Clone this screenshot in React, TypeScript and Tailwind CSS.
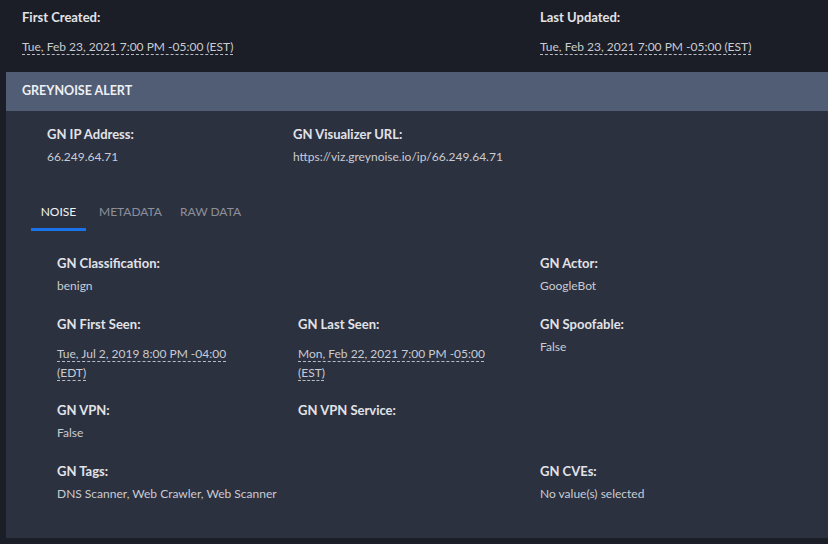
import React from 'react';

function Label({ children }: { children: React.ReactNode }) {
  return <div className="text-[13px] leading-[20px] font-bold text-[#e1e3e8]">{children}</div>;
}

function Value({ children }: { children?: React.ReactNode }) {
  return <div className="mt-[3px] text-[12px] leading-[20px] text-[#c9ccd3]">{children}</div>;
}

function DateValue({ children, narrow }: { children: React.ReactNode; narrow?: boolean }) {
  return (
    <div className={`mt-[10px] text-[12px] leading-[19px] text-[#c9ccd3] ${narrow ? 'max-w-[190px]' : ''}`}>
      <span className="underline decoration-dashed decoration-[#b8bcc4] underline-offset-[3px]">{children}</span>
    </div>
  );
}

function Field({ label, value, date }: { label: string; value?: string; date?: boolean }) {
  return (
    <div>
      <Label>{label}</Label>
      {value !== undefined && (date ? <DateValue narrow>{value}</DateValue> : <Value>{value}</Value>)}
    </div>
  );
}

export default function App() {
  return (
    <div className="h-[544px] w-full overflow-hidden bg-[#1b1e26] font-['Lato',sans-serif]">
      {/* top meta */}
      <div className="grid grid-cols-[518px_1fr] px-[22px] pt-[7px] pb-[16px]">
        <div>
          <Label>First Created:</Label>
          <DateValue>Tue, Feb 23, 2021 7:00 PM -05:00 (EST)</DateValue>
        </div>
        <div>
          <Label>Last Updated:</Label>
          <DateValue>Tue, Feb 23, 2021 7:00 PM -05:00 (EST)</DateValue>
        </div>
      </div>

      {/* alert panel */}
      <div className="ml-[6px] h-[466px] bg-[#2c3140]">
        <div className="flex h-[39px] items-center bg-[#505d75] px-[16px]">
          <span className="text-[12.5px] font-bold text-[#eef0f4]">GREYNOISE ALERT</span>
        </div>

        <div className="pt-[13px]">
          <div className="flex pl-[41px]">
            <div className="w-[246px]">
              <Field label="GN IP Address:" value="66.249.64.71" />
            </div>
            <Field label="GN Visualizer URL:" value="https://viz.greynoise.io/ip/66.249.64.71" />
          </div>

          <div className="mt-[28px] flex gap-[2px] pl-[25px]">
            <button className="h-[36px] w-[55px] border-b-[3px] border-[#1a73e8] text-[12px] text-[#f1f2f4]">NOISE</button>
            <button className="h-[36px] w-[79px] border-b-[3px] border-transparent pl-[11px] text-left text-[12px] text-[#8b909b]">METADATA</button>
            <button className="h-[36px] border-b-[3px] border-transparent px-[11px] text-[12px] text-[#8b909b]">RAW DATA</button>
          </div>

          <div className="grid grid-cols-[241px_242px_1fr] gap-y-[18px] pl-[51px] pt-[22px]">
            <Field label="GN Classification:" value="benign" />
            <div />
            <Field label="GN Actor:" value="GoogleBot" />

            <Field label="GN First Seen:" value="Tue, Jul 2, 2019 8:00 PM -04:00 (EDT)" date />
            <Field label="GN Last Seen:" value="Mon, Feb 22, 2021 7:00 PM -05:00 (EST)" date />
            <Field label="GN Spoofable:" value="False" />

            <Field label="GN VPN:" value="False" />
            <Field label="GN VPN Service:" />
            <div />

            <Field label="GN Tags:" value="DNS Scanner, Web Crawler, Web Scanner" />
            <div />
            <Field label="GN CVEs:" value="No value(s) selected" />
          </div>
        </div>
      </div>
    </div>
  );
}
